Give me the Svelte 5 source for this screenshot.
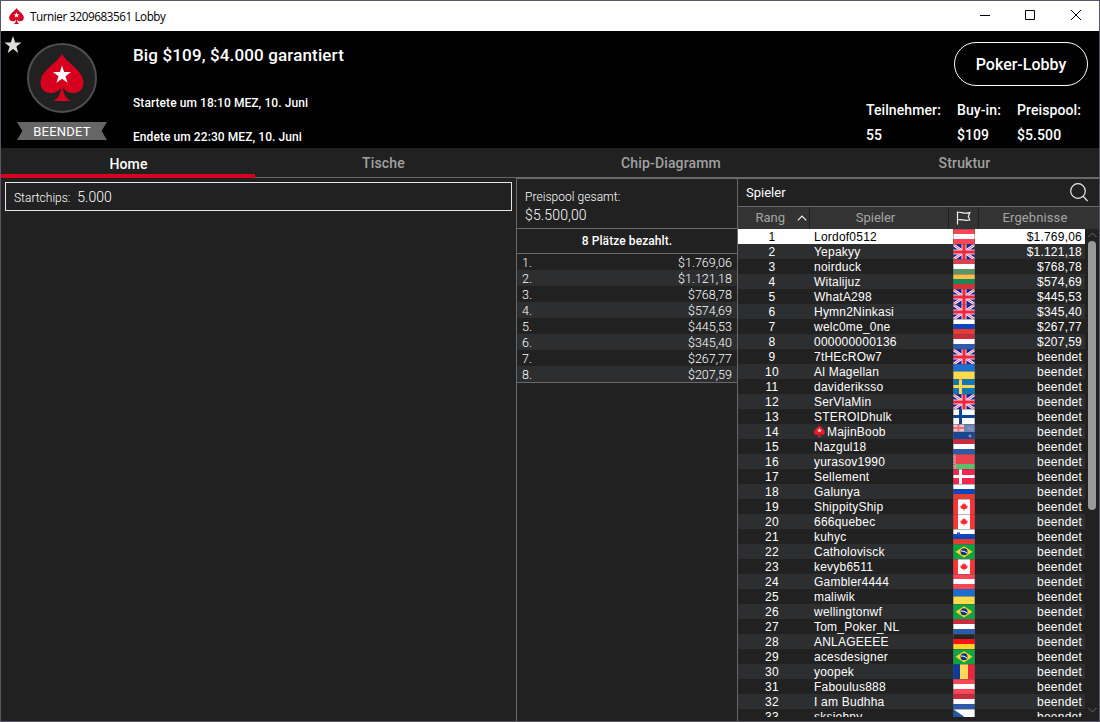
<script>
	const tabs = ['Home', 'Tische', 'Chip-Diagramm', 'Struktur'];
	let active = $state('Home');
	let selected = $state(1);

	const facts = [
		{ label: 'Teilnehmer:', value: '55' },
		{ label: 'Buy-in:', value: '$109' },
		{ label: 'Preispool:', value: '$5.500' }
	];

	const prizes = [
		'$1.769,06',
		'$1.121,18',
		'$768,78',
		'$574,69',
		'$445,53',
		'$345,40',
		'$267,77',
		'$207,59'
	];

	const players = [
		['Lordof0512', 'at'],
		['Yepakyy', 'gb'],
		['noirduck', 'hu'],
		['Witalijuz', 'lt'],
		['WhatA298', 'gb'],
		['Hymn2Ninkasi', 'gb'],
		['welc0me_0ne', 'ru'],
		['000000000136', 'nl'],
		['7tHEcROw7', 'gb'],
		['Al Magellan', 'ua'],
		['davideriksso', 'se'],
		['SerVlaMin', 'gb'],
		['STEROIDhulk', 'fi'],
		['MajinBoob', 'nz'],
		['Nazgul18', 'nl'],
		['yurasov1990', 'by'],
		['Sellement', 'dk'],
		['Galunya', 'ru'],
		['ShippityShip', 'ca'],
		['666quebec', 'ca'],
		['kuhyc', 'si'],
		['Catholovisck', 'br'],
		['kevyb6511', 'ca'],
		['Gambler4444', 'at'],
		['maliwik', 'ua'],
		['wellingtonwf', 'br'],
		['Tom_Poker_NL', 'nl'],
		['ANLAGEEEE', 'de'],
		['acesdesigner', 'br'],
		['yoopek', 'ro'],
		['Faboulus888', 'at'],
		['I am Budhha', 'nl'],
		['sksjohny', 'cz']
	].map(([name, flag], i) => ({
		rank: i + 1,
		name,
		flag,
		staff: name === 'MajinBoob',
		result: prizes[i] ?? 'beendet'
	}));

	// horizontal bands, top to bottom
	const bands = {
		at: ['#fb4655', '#ffffff', '#fb4655'],
		hu: ['#df3f50', '#ffffff', '#5c9468'],
		lt: ['#fdc04a', '#1b8656', '#d83237'],
		ru: ['#ffffff', '#0b47b8', '#e63c34'],
		nl: ['#cb2b3a', '#ffffff', '#2f5aa8'],
		ua: ['#1b6fd2', '#ffdb4c'],
		si: ['#ffffff', '#0b47b8', '#e63c34'],
		de: ['#252525', '#f81414', '#ffd426'],
		by: ['#e8434f', '#e8434f', '#5fbd6c']
	};

	// Nordic crosses: field, cross
	const crosses = {
		se: ['#1477b5', '#ffd84f'],
		fi: ['#ffffff', '#0b4596'],
		dk: ['#f3274d', '#ffffff']
	};
</script>

{#snippet spade(fill)}
	<path
		{fill}
		d="M22 0C17 9 .5 17 .5 28.500C.5 35 5 39 10.500 39C15 39 19 37 21 33.500C20.800 40 18 45 13 47H31C26 45 23.200 40 23 33.500C25 37 29 39 33.500 39C39 39 43.500 35 43.500 28.500C43.500 17 27 9 22 0Z"
	/>
	<path
		fill="#fff"
		d="M22 11.500L24.100 18H31L25.500 22.200L27.600 28.800L22 24.700L16.400 28.800L18.500 22.200L13 18H19.900Z"
	/>
{/snippet}

{#snippet union()}
	<rect width="22" height="15" fill="#14209a" />
	<path d="M0 0.500L22 15.500M22 0.500L0 15.500" stroke="#f4eef6" stroke-width="2.800" />
	<path d="M0 0.500L22 15.500M22 0.500L0 15.500" stroke="#f0506a" stroke-width="0.900" />
	<path d="M11 0V15M0 8H22" stroke="#f4cfdb" stroke-width="5" />
	<path d="M11 0V15M0 8H22" stroke="#f0263f" stroke-width="3" />
{/snippet}

{#snippet flagIcon(code)}
	<svg class="flag" viewBox="0 0 22 15" width="22" height="15">
		{#if bands[code]}
			{#each bands[code] as color, i}
				<rect
					y={(i * 15) / bands[code].length}
					width="22"
					height={15 / bands[code].length + 0.1}
					fill={color}
				/>
			{/each}
		{/if}
		{#if crosses[code]}
			<rect width="22" height="15" fill={crosses[code][0]} />
			<path d="M7.500 0V15M0 7.500H22" stroke={crosses[code][1]} stroke-width="3" />
		{/if}
		{#if code === 'gb'}
			{@render union()}
		{:else if code === 'nz'}
			<rect width="22" height="15" fill="#1c4590" />
			<rect width="22" height="8" fill="#6d87bb" />
			<rect width="11" height="7.500" fill="#e9c3cc" />
			<path d="M5.500 0V7.500M0 4H11" stroke="#e9707c" stroke-width="2" />
			<path d="M16 3.500V5.500M19 4.500V6.500M17 10.500V13.500M15.500 12H18.500" stroke="#d99aad" />
		{:else if code === 'by'}
			<rect width="2.500" height="15" fill="#e9a3a9" />
			<path d="M1.200 1V15" stroke="#d8434f" stroke-dasharray="1.500 1.500" />
		{:else if code === 'si'}
			<path d="M4 3.500h3v3l-1.500 1.500l-1.500-1.500z" fill="#0b47b8" />
			<path d="M4.800 5.300l.8-.9.8.9z" fill="#fff" />
		{:else if code === 'ca'}
			<rect width="22" height="15" fill="#ff3236" />
			<rect x="5" width="12" height="15" fill="#fff" />
			<path
				d="M11 4L12 5.500L13 5.200V6.800L14.500 6.500V8.500L13 10H11.500V11.500H10.500V10H9L7.500 8.500V6.500L9 6.800V5.200L10 5.500Z"
				fill="#ff2a2e"
			/>
		{:else if code === 'br'}
			<rect width="22" height="15" fill="#0fa442" />
			<path d="M11 2.200L19.500 7.800L11 13.400L2.500 7.800Z" fill="#fcd52c" />
			<circle cx="11" cy="7.800" r="3.500" fill="#0d3584" />
			<path d="M8 7Q11 6.500 14 9" fill="none" stroke="#fff" />
		{:else if code === 'ro'}
			<rect width="22" height="15" fill="#ffd954" />
			<rect width="7" height="15" fill="#0c3c9a" />
			<rect x="15" width="7" height="15" fill="#e9283f" />
		{:else if code === 'cz'}
			<rect width="22" height="15" fill="#fff" />
			<path d="M0 0L11 7.500L0 15Z" fill="#2257a0" />
		{/if}
		<path d="M0 .5H22M.5 0V15M21.500 0V15" stroke="#505058" stroke-opacity=".42" />
	</svg>
{/snippet}

<div class="window">
	<div class="titlebar">
		<svg class="app-icon" viewBox="0 0 44 47" width="15" height="16">{@render spade('#d7001f')}</svg>
		<span class="caption">Turnier 3209683561 Lobby</span>
		<div class="controls">
			<svg viewBox="0 0 46 30"><path d="M19 14.500H29" /></svg>
			<svg viewBox="0 0 46 30"><path d="M18.500 9.500H27.500V18.500H18.500Z" /></svg>
			<svg viewBox="0 0 46 30"><path d="M18 9L28 19M28 9L18 19" /></svg>
		</div>
	</div>

	<header>
		<svg class="favorite" viewBox="0 0 18 18" width="18" height="18">
			<path d="M9 0L11.200 6.500H17.500L12.400 10.500L14.300 17L9 13L3.700 17L5.600 10.500L.5 6.500H6.800Z" />
		</svg>
		<div class="badge">
			<div class="disc">
				<svg viewBox="0 0 44 47" width="44" height="47">{@render spade('#d7001f')}</svg>
			</div>
			<div class="ribbon">BEENDET</div>
		</div>
		<div class="info">
			<h1>Big $109, $4.000 garantiert</h1>
			<p>Startete um 18:10 MEZ, 10. Juni</p>
			<p>Endete um 22:30 MEZ, 10. Juni</p>
		</div>
		<div class="summary">
			<button class="lobby">Poker-Lobby</button>
			<div class="facts">
				{#each facts as fact}
					<div>{fact.label}<br />{fact.value}</div>
				{/each}
			</div>
		</div>
	</header>

	<nav>
		{#each tabs as tab}
			<button class:active={tab === active} onclick={() => (active = tab)}>{tab}</button>
		{/each}
	</nav>

	<main>
		<section class="home">
			<div class="chips">Startchips:<span>5.000</span></div>
		</section>

		<section class="payouts">
			<div class="pool">
				<div>Preispool gesamt:</div>
				<div class="amount">$5.500,00</div>
			</div>
			<div class="paid">8 Plätze bezahlt.</div>
			<div class="prizes">
				{#each prizes as prize, i}
					<div class="prize"><span>{i + 1}.</span><span>{prize}</span></div>
				{/each}
			</div>
		</section>

		<section class="players">
			<div class="search">
				<span>Spieler</span>
				<svg viewBox="0 0 18 19" width="18" height="19">
					<circle cx="8" cy="8" r="7.300" />
					<path d="M13 13.200L17.500 18" />
				</svg>
			</div>
			<div class="columns">
				<div class="rank">
					Rang
					<svg viewBox="0 0 10 6" width="10" height="6"><path d="M.8 5.300L5 1L9.200 5.300" /></svg>
				</div>
				<div class="player">Spieler</div>
				<div>
					<svg viewBox="0 0 15 14" width="15" height="14">
						<path d="M1.500 .5V13.500M1.500 1.500C5 .2 7.500 3.500 13.800 1.700L12.300 5.500L13.800 9C8 10.500 5 7.500 1.500 9" />
					</svg>
				</div>
				<div class="results">Ergebnisse</div>
			</div>
			<div class="list">
				<div class="rows">
					{#each players as player (player.rank)}
						<!-- svelte-ignore a11y_click_events_have_key_events, a11y_no_static_element_interactions -->
						<div
							class="row"
							class:selected={player.rank === selected}
							onclick={() => (selected = player.rank)}
						>
							<span class="pos">{player.rank}</span>
							<span class="name">
								{#if player.staff}
									<svg viewBox="0 0 44 47" width="11" height="12">{@render spade('#ee1c2b')}</svg>
								{/if}
								{player.name}
							</span>
							{@render flagIcon(player.flag)}
							<span class="result">{player.result}</span>
						</div>
					{/each}
				</div>
				<div class="scrollbar">
					<svg viewBox="0 0 9 6" width="9" height="6"><path d="M.5 5L4.500 1L8.500 5" /></svg>
					<div class="thumb"></div>
					<svg viewBox="0 0 9 6" width="9" height="6"><path d="M.5 1L4.500 5L8.500 1" /></svg>
				</div>
			</div>
		</section>
	</main>
</div>

<style>
	:global(body) {
		background: #212121;
	}

	.window {
		display: flex;
		flex-direction: column;
		box-sizing: border-box;
		width: 1100px;
		height: 722px;
		border: 1px solid #5a5669;
		overflow: hidden;
		background: #212121;
		color: #fff;
		font-family: Roboto, sans-serif;
		font-size: 13px;
	}

	button {
		border: 0;
		padding: 0;
		background: none;
		color: inherit;
		font: inherit;
	}

	.titlebar {
		display: flex;
		align-items: center;
		flex: none;
		height: 30px;
		padding-left: 8px;
		background: #fff;
		color: #000;
		font: 12px/30px 'Open Sans', sans-serif;
	}

	.caption {
		margin-left: 6px;
		font-size: 11.7px;
		letter-spacing: -0.44px;
	}

	.controls {
		display: flex;
		margin-left: auto;
	}

	.controls svg {
		width: 46px;
		height: 30px;
		fill: none;
		stroke: #000;
	}

	header {
		display: flex;
		position: relative;
		flex: none;
		height: 117px;
		background: #000;
	}

	.favorite {
		position: absolute;
		top: 5px;
		left: 3px;
		fill: #dedede;
	}

	.badge {
		display: flex;
		flex-direction: column;
		align-items: center;
		width: 122px;
		padding-top: 12px;
	}

	.disc {
		display: flex;
		justify-content: center;
		box-sizing: border-box;
		width: 70px;
		height: 70px;
		padding-top: 9px;
		border: 2px solid #4e4e4e;
		border-radius: 50%;
		background: #212121;
	}

	.ribbon {
		width: 90px;
		height: 18px;
		margin-top: 9px;
		clip-path: polygon(0 0, 100% 0, 94% 50%, 100% 100%, 0 100%, 6% 50%);
		background: #666;
		font-size: 13px;
		letter-spacing: 0.2px;
		line-height: 19px;
		text-align: center;
	}

	.info {
		padding: 12px 0 0 10px;
		font-weight: 500;
	}

	.info h1 {
		margin: 0 0 20px;
		font-size: 17px;
		font-weight: 500;
		letter-spacing: 0.14px;
		line-height: 24px;
	}

	.info p {
		margin: 0;
		font-size: 12px;
		letter-spacing: 0.07px;
		line-height: 34px;
	}

	.info h1 + p {
		margin-top: -1px;
	}

	.summary {
		display: flex;
		flex-direction: column;
		align-items: flex-end;
		margin-left: auto;
		padding: 11px 11px 0 0;
		font-weight: 500;
	}

	.lobby {
		box-sizing: border-box;
		width: 134px;
		height: 44px;
		border: 1px solid #fff;
		border-radius: 22px;
		font-size: 16px;
	}

	.facts {
		display: flex;
		gap: 16px;
		margin: 12px 7px 0 0;
		font-size: 14px;
		letter-spacing: 0.1px;
		line-height: 25px;
	}

	nav {
		display: grid;
		grid-template-columns: 254px 257px 318px 269px;
		flex: none;
		height: 30px;
		box-shadow: inset 0 -1px #696969;
		color: #a0a0a0;
		font-size: 14px;
		font-weight: 500;
	}

	nav button {
		letter-spacing: 0.15px;
	}

	nav button.active {
		border-bottom: 4px solid #d7001f;
		padding: 5px 0 0 1px;
		color: #fff;
	}

	main {
		display: grid;
		grid-template-columns: 515px 222px 1fr;
		flex: 1;
		min-height: 0;
	}

	.home {
		padding: 4px;
	}

	.chips {
		box-sizing: border-box;
		width: 507px;
		height: 29px;
		padding-left: 8px;
		border: 1px solid #e6e6e6;
		font-size: 12px;
		font-weight: 300;
		line-height: 29px;
	}

	.chips span {
		margin-left: 7px;
		font-size: 14px;
	}

	.payouts {
		border: solid #696969;
		border-width: 1px 1px 0;
		font-weight: 300;
	}

	.pool {
		box-sizing: border-box;
		height: 49px;
		padding: 10px 8px 0;
		font-size: 12px;
		letter-spacing: 0.05px;
		line-height: 17px;
	}

	.amount {
		font-size: 14px;
		letter-spacing: 0.15px;
		line-height: 19px;
	}

	.paid {
		height: 24px;
		border: solid #696969;
		border-width: 1px 0;
		font-size: 12px;
		font-weight: 500;
		letter-spacing: 0.08px;
		line-height: 25px;
		text-align: center;
	}

	.prizes {
		border-bottom: 1px solid #696969;
		font-size: 12.5px;
	}

	.prize {
		display: flex;
		justify-content: space-between;
		height: 16px;
		padding: 0 5px;
		line-height: 17px;
	}

	.prize:nth-child(even) {
		background: #2d2e30;
	}

	.players {
		display: flex;
		flex-direction: column;
		min-height: 0;
		border-top: 1px solid #696969;
	}

	.search {
		display: flex;
		align-items: center;
		justify-content: space-between;
		flex: none;
		height: 27px;
		padding: 0 11px 0 8px;
		border-bottom: 1px solid #696969;
	}

	.search svg {
		fill: none;
		stroke: #eee;
		stroke-width: 1.2;
	}

	.columns {
		display: grid;
		grid-template-columns: 71px 138px 29px 1fr;
		gap: 1px;
		flex: none;
		height: 22px;
		background: #212121;
		color: #a5a5a5;
		line-height: 14px;
	}

	.columns div {
		display: flex;
		align-items: center;
		justify-content: center;
		background: #333;
	}

	.columns svg {
		fill: none;
		stroke: #eee;
		stroke-width: 1.2;
	}

	.columns .rank {
		justify-content: flex-end;
		gap: 12px;
		padding-right: 2px;
	}

	.columns .player {
		padding-right: 7px;
	}

	.columns .results {
		padding-right: 8px;
		letter-spacing: 0.1px;
	}

	.list {
		display: flex;
		height: 488px;
	}

	.rows {
		width: 347px;
		overflow: hidden;
		font-family: 'Liberation Sans', Arial, sans-serif;
		font-size: 12px;
		letter-spacing: 0.22px;
	}

	.row {
		display: grid;
		grid-template-columns: 76px 139px 22px 1fr;
		height: 15px;
		line-height: 17px;
	}

	.row:nth-child(even) {
		background: #2d2e30;
	}

	.row.selected {
		background: #fff;
		color: #000;
	}

	.pos {
		padding-right: 8px;
		text-align: center;
	}

	.name {
		display: flex;
		gap: 2px;
		white-space: nowrap;
	}

	.name svg {
		margin-top: 1px;
	}

	.flag {
		display: block;
	}

	.result {
		padding-right: 3px;
		text-align: right;
	}

	.scrollbar {
		display: flex;
		flex-direction: column;
		align-items: center;
		justify-content: space-between;
		width: 14px;
		padding: 3px 0 4px;
		box-sizing: border-box;
	}

	.scrollbar svg {
		flex: none;
		fill: none;
		stroke: #6b6b6b;
	}

	.thumb {
		width: 8px;
		height: 269px;
		margin: 3px 0 auto;
		border-radius: 4px;
		background: #999;
	}
</style>
